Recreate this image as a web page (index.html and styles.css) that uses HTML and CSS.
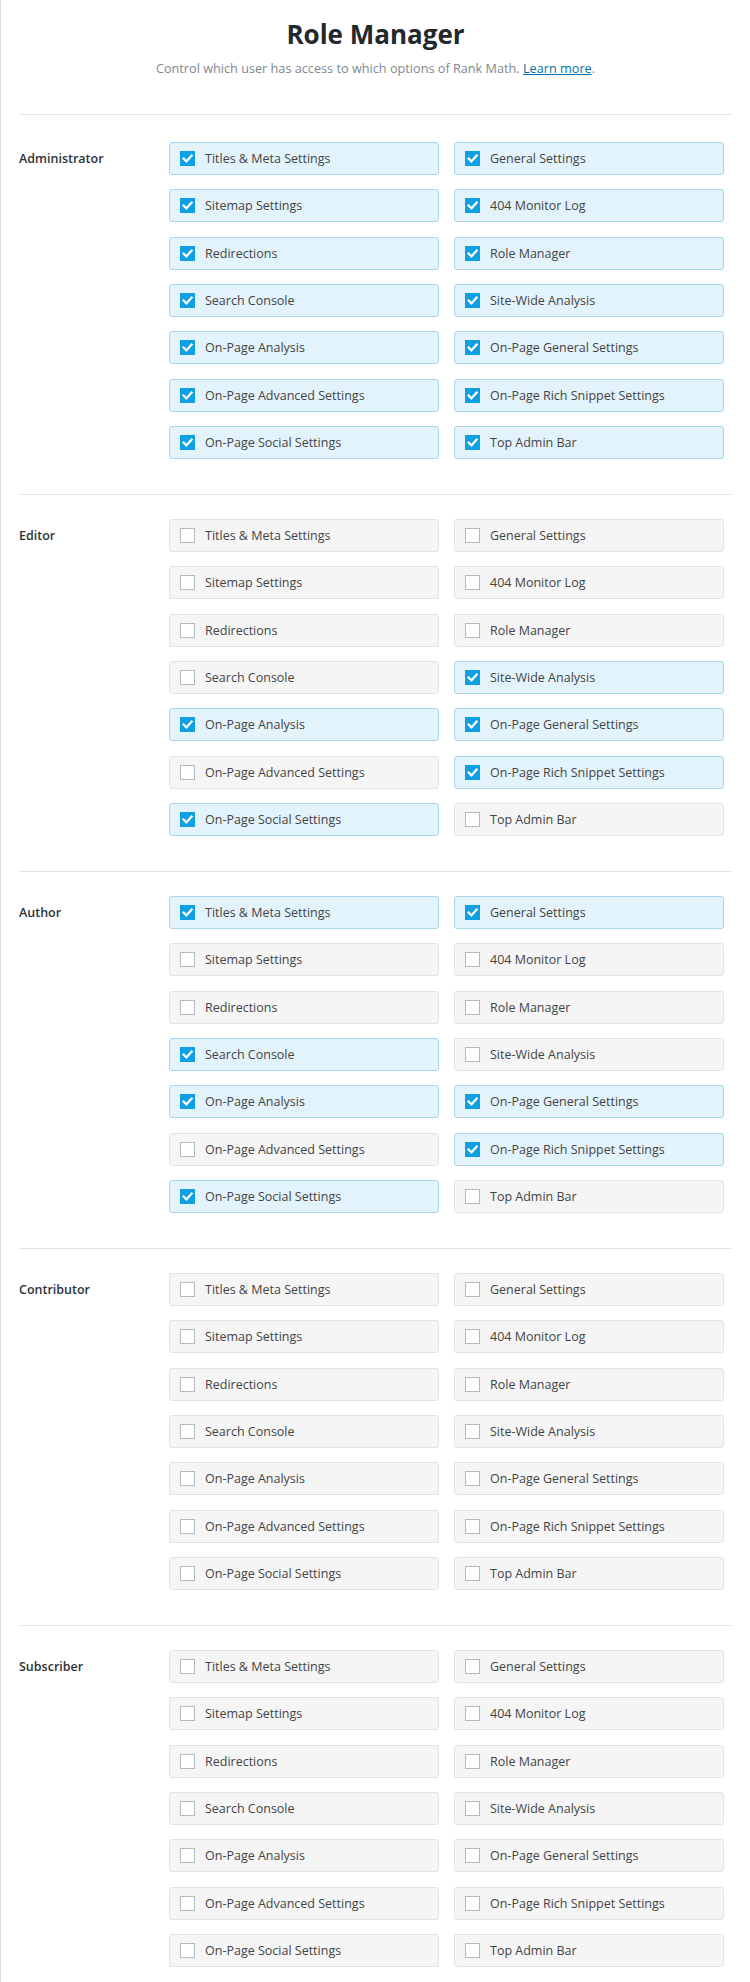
FILE: index.html
```html
<!DOCTYPE html>
<html lang="en">
<head>
<meta charset="utf-8">
<title>Role Manager</title>
<link rel="stylesheet" href="styles.css">
</head>
<body>
<div class="page">
  <header class="head">
    <h1 class="title">Role Manager</h1>
    <p class="sub">Control which user has access to which options of Rank Math. <a href="#" class="link">Learn more</a>.</p>
  </header>
  <div id="roles"></div>
</div>
<script src="app.js"></script>
</body>
</html>
```
FILE: app.js
```js
var opts = ["Titles & Meta Settings","General Settings","Sitemap Settings","404 Monitor Log","Redirections","Role Manager","Search Console","Site-Wide Analysis","On-Page Analysis","On-Page General Settings","On-Page Advanced Settings","On-Page Rich Snippet Settings","On-Page Social Settings","Top Admin Bar"];
var roles = [
  ["Administrator", [1,1,1,1,1,1,1,1,1,1,1,1,1,1]],
  ["Editor",        [0,0,0,0,0,0,0,1,1,1,0,1,1,0]],
  ["Author",        [1,1,0,0,0,0,1,0,1,1,0,1,1,0]],
  ["Contributor",   [0,0,0,0,0,0,0,0,0,0,0,0,0,0]],
  ["Subscriber",    [0,0,0,0,0,0,0,0,0,0,0,0,0,0]]
];
var tick = '<svg viewBox="0 0 15 15" width="15" height="15"><path d="M3.6 7.6 L6.4 10.4 L11.6 4.6" fill="none" stroke="#fff" stroke-width="2.3" stroke-linecap="square"/></svg>';
var html = "";
roles.forEach(function (r) {
  html += '<section class="role"><div class="role-name">' + r[0] + '</div><div class="grid">';
  opts.forEach(function (o, i) {
    var on = r[1][i];
    html += '<label class="opt' + (on ? ' on' : '') + '"><span class="cb">' + (on ? tick : '') + '</span><span class="txt">' + o.replace("&", "&amp;") + '</span></label>';
  });
  html += '</div></section>';
});
document.getElementById("roles").innerHTML = html;
```
FILE: styles.css
```css
html, body {
  margin: 0;
  padding: 0;
  background: #fff;
}
body {
  font-family: "Open Sans", "Noto Sans", sans-serif;
  color: #444;
}
.page {
  border-left: 1px solid #dadada;
  padding: 17.5px 18px 0 18px;
  min-height: 1982px;
  box-sizing: border-box;
}
.head {
  text-align: center;
  border-bottom: 1px solid #e5e5e5;
  padding-bottom: 36.5px;
}
.title {
  margin: 0;
  font-size: 26px;
  line-height: 32px;
  font-weight: 700;
  color: #23282d;
}
.sub {
  margin: 8px 0 0;
  font-size: 12.7px;
  line-height: 20px;
  color: #7e8993;
}
.link {
  color: #0073aa;
  text-decoration: underline;
}
.role {
  display: flex;
  align-items: flex-start;
  padding: 24px 0 35px;
  border-top: 1px solid #e5e5e5;
}
.role:first-child {
  border-top: 0;
  padding-top: 27px;
}
.role-name {
  width: 150px;
  flex: none;
  font-size: 12.5px;
  font-weight: 600;
  color: #2c3338;
  line-height: 33px;
}
.grid {
  display: grid;
  grid-template-columns: 270px 270px;
  column-gap: 15px;
  row-gap: 14.33px;
}
.opt {
  display: flex;
  align-items: center;
  height: 33px;
  box-sizing: border-box;
  border: 1px solid #e3e3e3;
  background: #f5f5f5;
  border-radius: 3px;
  padding-left: 10px;
  font-size: 12.5px;
  color: #444;
}
.opt.on {
  background: #e3f3fb;
  border-color: #a9d6ec;
}
.cb {
  width: 15px;
  height: 15px;
  box-sizing: border-box;
  border: 1px solid #b4b9be;
  background: #fff;
  margin-right: 10px;
  flex: none;
  display: flex;
}
.opt.on .cb {
  border: 0;
  background: #0fa0e4;
}
.cb svg {
  display: block;
}
```
